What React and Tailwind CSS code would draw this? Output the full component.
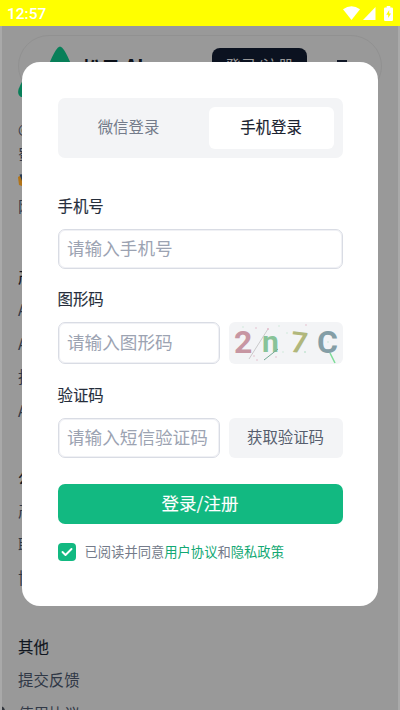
import React from "react";

const footerGroups = [
  { title: "产品", height: "h-[201px]", items: ["AI写作", "AI绘图", "拓展工具", "AI助手"] },
  { title: "公司", height: "h-[169px]", items: ["产品介绍", "联系我们", "协作伙伴"] },
  { title: "其他", height: "h-[120px]", items: ["提交反馈", "使用协议"] },
];

function StatusBar() {
  return (
    <div className="relative z-20 flex h-[26px] items-center justify-between bg-[#ffff00] pl-[7px] pr-[7px] text-white">
      <span className="pt-[3px] font-[Roboto,sans-serif] text-[15.5px] font-medium leading-none">12:57</span>
      <div className="flex items-center">
        <svg className="h-[14px] w-[17px]" viewBox="0 0 17 15" preserveAspectRatio="none" fill="currentColor">
          <path d="M0 3.4Q8.5-3 17 3.4L8.5 15Z" />
        </svg>
        <svg className="ml-[3px] h-[13px] w-[13px]" viewBox="0 0 13 13" fill="currentColor">
          <path d="M12.5 0v13H0z" />
        </svg>
        <svg className="ml-[8px] h-[15px] w-[9px]" viewBox="0 0 9 15" fill="currentColor">
          <path fillRule="evenodd" d="M2.7 0h3.6v1.6h1.5q1.2 0 1.2 1.2v11q0 1.2-1.2 1.2H1.2Q0 15 0 13.8v-11q0-1.2 1.2-1.2h1.5zM5.2 4 2.2 8.8h2V12l2.8-4.6H5.2z" />
        </svg>
      </div>
    </div>
  );
}

function Backdrop() {
  return (
    <div className="relative h-[684px] overflow-hidden border-x-2 border-[#a9a9a9] bg-[#999999] px-4">
      <div className="mt-[9px] flex h-[62px] items-start rounded-[31px] border border-[#919191] pr-[34px]">
        <svg className="-ml-[1px] mt-[10px] h-[52px] w-[84px] shrink-0" viewBox="0 0 84 52">
          <path d="M38 4Q42-3 46 4Q50 10 54 21H30Q34 10 38 4Z" fill="#087f59" />
          <path d="M12 24Q4 34 .6 43Q-1 49 3 51H12Z" fill="#087f59" />
        </svg>
        <span className="-ml-[20px] flex items-start whitespace-nowrap text-[19px] font-bold leading-[28px] text-[#0b1018]">
          <span className="mt-[18px]">松果</span>
          <span className="ml-[5px] mt-[15px]">AI</span>
        </span>
        <span className="ml-auto mt-[12px] flex h-[36px] w-[95px] shrink-0 items-center justify-center rounded-lg bg-[#0b1220] text-[15.5px] text-[#999999]">登录/注册</span>
        <span className="ml-[30px] mt-[24px] h-[2px] w-[10px] bg-[#111827]" />
      </div>
      <div className="mt-[18px] text-[15px] leading-[26px] text-[#303846]">
        <p className="text-[13.5px]">@2024</p>
        <p>蜀ICP备</p>
        <svg className="my-[6px] h-[14px] w-[14px]" viewBox="0 0 14 14">
          <path d="M0 4 7 0l6 4-1 7-5 3-6-2z" fill="#b27418" />
          <path d="M1.5 1.5 7 1l3 6-6 1z" fill="#263a55" />
        </svg>
        <p>网信算备</p>
      </div>
      <div className="mt-[41px]">
        {footerGroups.map((group) => (
          <div key={group.title} className={`text-[15.4px] leading-[33.4px] text-[#303846] ${group.height}`}>
            <p className="text-[#101620] [-webkit-text-stroke:0.15px]">{group.title}</p>
            {group.items.map((item, i) => (
              <p key={i}>{item}</p>
            ))}
          </div>
        ))}
      </div>
      <div className="absolute -left-[7px] bottom-[-6px] h-[10px] w-[10px] rounded-full bg-[#30343b]" />
    </div>
  );
}

function Field({ placeholder, className }) {
  return (
    <div className={`flex items-center rounded-[7px] border border-[#d9dce4] pb-[1px] pl-[8.5px] text-[17.6px] text-[#9ca3b2] shadow-[inset_0_0_0_1px_#f0f1f5] ${className}`}>
      <span className="whitespace-nowrap">{placeholder}</span>
    </div>
  );
}

function Label({ children, className }) {
  return (
    <p className={`h-[24px] shrink-0 text-[15.4px] leading-[24px] text-[#252d3b] [-webkit-text-stroke:0.15px] ${className}`}>
      {children}
    </p>
  );
}

function Captcha() {
  return (
    <svg className="h-[42px] w-[114px] rounded-[6px] bg-[#f3f4f6]" viewBox="0 0 114 42">
      <g className="font-[Roboto,sans-serif] font-bold">
        <text x="5" y="31" fontSize="32" fill="#c796a2">2</text>
        <text x="33" y="29.5" fontSize="30" fill="#88c398">n</text>
        <text x="62" y="30.5" fontSize="29" fill="#b1b77c" transform="rotate(7 70 20)">7</text>
        <text x="88" y="31" fontSize="32" fill="#849ea6">C</text>
      </g>
      <path d="m20 37 19-30" stroke="#cacacb" />
      <path d="m35 38 14-11" stroke="#75a994" />
      <path d="m101 31 5 10" stroke="#7ddc98" strokeWidth="1.5" />
      <g fill="#e3bccb">
        <circle cx="27" cy="6" r=".8" /><circle cx="39" cy="7" r="1" /><circle cx="25" cy="34" r=".8" />
        <circle cx="77" cy="3" r=".8" /><circle cx="47" cy="35" r=".8" /><circle cx="28" cy="38" r=".8" />
      </g>
      <g fill="#c4e5d3">
        <circle cx="14" cy="5" r=".7" /><circle cx="58" cy="11" r=".7" /><circle cx="76" cy="30" r="1" />
        <circle cx="54" cy="30" r=".7" /><circle cx="50" cy="4" r=".7" /><circle cx="99" cy="20" r=".8" />
      </g>
    </svg>
  );
}

function LoginDialog() {
  return (
    <div className="absolute inset-0 z-10 flex items-start justify-center pt-[62px]">
      <div className="flex h-[544px] w-[356px] flex-col rounded-[18px] bg-white pl-[35.5px] pr-[35.5px] pt-[36px]">
        <div className="flex h-[60px] shrink-0 rounded-[7px] bg-[#f3f4f6] p-[9px] text-[15.4px]">
          <div className="flex w-[124px] items-center justify-center pb-[2px] text-[#747b8a]">微信登录</div>
          <div className="ml-auto flex w-[125px] items-center justify-center rounded-[6px] bg-white pb-[2px] text-[#1a2230] [-webkit-text-stroke:0.15px]">手机登录</div>
        </div>
        <Label className="mt-[35px]">手机号</Label>
        <Field placeholder="请输入手机号" className="mt-[12px] h-[40px] shrink-0" />
        <Label className="mt-[17px]">图形码</Label>
        <div className="mt-[12px] flex h-[42px] shrink-0 justify-between">
          <Field placeholder="请输入图形码" className="h-[42px] w-[162px]" />
          <Captcha />
        </div>
        <Label className="mt-[18px]">验证码</Label>
        <div className="mt-[12px] flex h-[40px] shrink-0 justify-between">
          <Field placeholder="请输入短信验证码" className="h-[40px] w-[162px]" />
          <div className="flex w-[114px] items-center justify-center rounded-[6px] bg-[#f3f4f6] pb-[2px] text-[15.4px] text-[#565e6e]">获取验证码</div>
        </div>
        <div className="mt-[26px] flex h-[40px] shrink-0 items-center justify-center rounded-[7px] bg-[#12b981] pb-[1px] text-[17.5px] text-white [-webkit-text-stroke:0.1px]">登录/注册</div>
        <div className="mt-[18px] flex h-[19px] items-center text-[13.3px] text-[#747b8a]">
          <span className="mr-[9px] flex h-[18px] w-[18px] items-center justify-center rounded-[4px] bg-[#12b981]">
            <svg className="h-[10px] w-[12px]" viewBox="0 0 12 10" fill="none" stroke="white" strokeWidth="1.9" strokeLinecap="round" strokeLinejoin="round">
              <path d="m1.5 5 3 3L10.5 2" />
            </svg>
          </span>
          <span className="whitespace-nowrap">已阅读并同意<span className="text-[#12a873]">用户协议</span>和<span className="text-[#12a873]">隐私政策</span></span>
        </div>
      </div>
    </div>
  );
}

export default function App() {
  return (
    <div className="relative h-[710px] w-[400px] overflow-hidden font-['Noto_Sans_CJK_SC',sans-serif]">
      <StatusBar />
      <Backdrop />
      <LoginDialog />
    </div>
  );
}
